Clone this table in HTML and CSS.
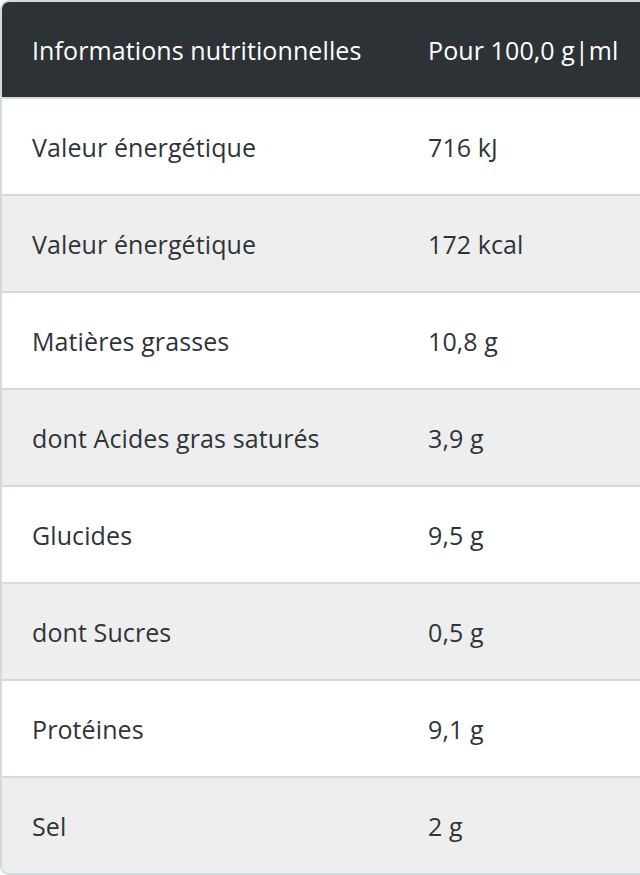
FILE: index.html
```html
<!DOCTYPE html>
<html lang="fr">
<head>
<meta charset="utf-8">
<link rel="stylesheet" href="styles.css">
</head>
<body>
<div class="table">
  <div class="row head"><div class="cell">Informations nutritionnelles</div><div class="cell">Pour 100,0 g|ml</div></div>
  <div class="row"><div class="cell">Valeur énergétique</div><div class="cell">716 kJ</div></div>
  <div class="row alt"><div class="cell">Valeur énergétique</div><div class="cell">172 kcal</div></div>
  <div class="row"><div class="cell">Matières grasses</div><div class="cell">10,8 g</div></div>
  <div class="row alt"><div class="cell">dont Acides gras saturés</div><div class="cell">3,9 g</div></div>
  <div class="row"><div class="cell">Glucides</div><div class="cell">9,5 g</div></div>
  <div class="row alt"><div class="cell">dont Sucres</div><div class="cell">0,5 g</div></div>
  <div class="row"><div class="cell">Protéines</div><div class="cell">9,1 g</div></div>
  <div class="row alt"><div class="cell">Sel</div><div class="cell">2 g</div></div>
</div>
</body>
</html>
```
FILE: styles.css
```css
html, body {
  margin: 0;
  padding: 0;
  background: #ffffff;
}
body {
  font-family: "Open Sans", "DejaVu Sans", sans-serif;
  color: #2f3439;
}
.table {
  width: 638px;
  border: 2px solid #d3dadd;
  border-right: none;
  border-radius: 9px 0 0 9px;
  overflow: hidden;
}
.row {
  display: grid;
  grid-template-columns: 395px 1fr;
  height: 95px;
  align-items: center;
  border-top: 2px solid #d3dadd;
  background: #ffffff;
  font-size: 25px;
  letter-spacing: 0.1px;
}
.row.head {
  border-top: none;
  background: #2d3237;
  color: #ffffff;
  font-weight: 500;
}
.row.alt {
  background: #eeeeee;
}
.cell {
  padding-left: 30px;
  white-space: nowrap;
}
.cell + .cell {
  padding-left: 31px;
}
```
